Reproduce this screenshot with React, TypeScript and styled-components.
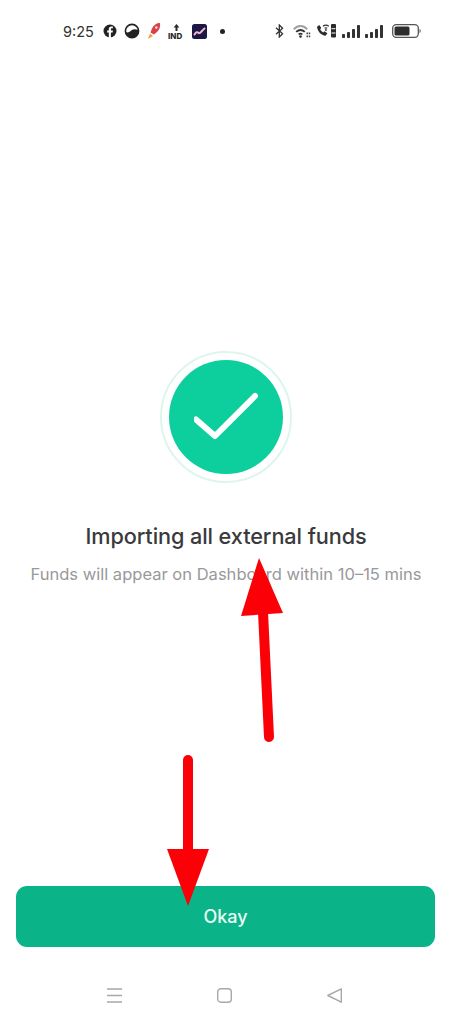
import React from "react";
import styled, { createGlobalStyle } from "styled-components";

const GlobalStyle = createGlobalStyle`
  html, body {
    margin: 0;
    padding: 0;
    background: #fff;
  }
`;

const Screen = styled.div`
  position: relative;
  display: flex;
  flex-direction: column;
  width: 456px;
  height: 1024px;
  overflow: hidden;
  background: #fff;
  font-family: Inter, "Noto Sans", sans-serif;
`;

const StatusBar = styled.div`
  display: flex;
  align-items: center;
  justify-content: space-between;
  height: 62px;
  padding: 0 35px 0 63px;
  color: #2b2b2b;
`;

const StatusGroup = styled.div<{ $gap: number }>`
  display: flex;
  align-items: center;
  gap: ${({ $gap }) => $gap}px;
`;

const Time = styled.span`
  width: 31px;
  margin-right: 2px;
  font-size: 14.5px;
  font-weight: 400;
  color: #333;
  white-space: nowrap;
`;

const NotificationDot = styled.span`
  width: 5px;
  height: 5px;
  margin-left: 6px;
  border-radius: 50%;
  background: #222;
`;

const Main = styled.main`
  flex: 1;
  display: flex;
  flex-direction: column;
  align-items: center;
  padding: 289px 4px 0 0;
`;

const Ring = styled.div`
  display: flex;
  align-items: center;
  justify-content: center;
  width: 132px;
  height: 132px;
  box-sizing: border-box;
  border: 2px solid #dcf6ee;
  border-radius: 50%;
`;

const Disc = styled.div`
  display: flex;
  align-items: center;
  justify-content: center;
  width: 114px;
  height: 114px;
  border-radius: 50%;
  background: #0ccf9d;
`;

const Title = styled.h1`
  margin: 38px 0 0;
  font-size: 21.7px;
  line-height: 30px;
  font-weight: 500;
  letter-spacing: -0.1px;
  color: #3a3a3c;
`;

const Subtitle = styled.p`
  margin: 12px 0 0;
  font-size: 16.55px;
  line-height: 22px;
  white-space: nowrap;
  color: #99999b;
`;

const Footer = styled.footer`
  display: flex;
  flex-direction: column;
  padding: 0 21px 0 16px;
`;

const OkayButton = styled.button`
  height: 61px;
  border: 0;
  padding: 0;
  border-radius: 11px;
  background: #0bb488;
  color: #eafaf5;
  font-family: inherit;
  font-size: 18px;
  font-weight: 500;
`;

const NavBar = styled.nav`
  display: flex;
  align-items: flex-start;
  justify-content: center;
  gap: 95px;
  height: 77px;
  box-sizing: border-box;
  padding: 41px 2px 0 0;
  color: #a8a8aa;
`;

const Annotation = styled.svg`
  position: absolute;
  left: 0;
  top: 0;
  width: 456px;
  height: 1024px;
  pointer-events: none;
`;

const FacebookIcon = () => (
  <svg width="14" height="14" viewBox="0 0 14 14">
    <circle cx="7" cy="7" r="6.5" fill="#222" />
    <path d="M7.900 14V8.400h1.700l.3-2H7.900V5.200c0-.6.3-1 1-1h1V2.500c-.4-.1-1-.1-1.500-.1-1.600 0-2.600 1-2.600 2.600v1.400H4.200v2h1.600V14z" fill="#fff" />
  </svg>
);

const MoonIcon = () => (
  <svg width="16" height="16" viewBox="0 0 16 16">
    <circle cx="8" cy="8" r="6.600" fill="#fff" stroke="#222" strokeWidth="1.600" />
    <path d="M1.600 9c2 .8 3.800.4 5-1 1.200-1.400 3.400-2.600 7.600-1.200C14.800 11 12 14.600 8 14.600 5 14.600 2.400 12.400 1.600 9z" fill="#222" />
  </svg>
);

const RocketIcon = () => (
  <svg width="14" height="18" viewBox="0 0 14 18">
    <path d="M13 1C9.500 1 6.500 3 5 6.500L3.500 10.500l3.500 2 3-2.500C12.500 7.500 13.500 4.500 13 1z" fill="#d8404a" />
    <path d="M3 11.500 1 17l5-3z" fill="#e8a33c" />
    <circle cx="9.300" cy="5.600" r="1.300" fill="#f6d9d0" />
  </svg>
);

const IndIcon = () => (
  <svg width="17" height="17" viewBox="0 0 17 17">
    <path d="M8.500 1 5.600 4.600h1.900V8h2V4.600h1.900z" fill="#2a2a2a" />
    <text x="0" y="15.500" fontSize="8" fontWeight="800" fontFamily="Inter, sans-serif" fill="#2a2a2a">IND</text>
  </svg>
);

const TradeIcon = () => (
  <svg width="15" height="15" viewBox="0 0 15 15">
    <rect width="15" height="15" rx="2.500" fill="#1b1846" />
    <path d="M2.500 10.500c1.500-2.500 2.800-3 4-1.500 1.500 1.200 2.800-1.800 6-4.500" fill="none" stroke="#f5b5c8" strokeWidth="2" strokeLinecap="round" />
  </svg>
);

const BluetoothIcon = () => (
  <svg width="9" height="14" viewBox="0 0 9 14">
    <path d="M1 3.800 7.600 9.800 4.300 13V1l3.300 3.200L1 10.200" fill="none" stroke="#333" strokeWidth="1.300" />
  </svg>
);

const WifiIcon = () => (
  <svg width="18" height="14" viewBox="0 0 18 14">
    <path d="M.8 5.200C4.800 1 10.200 1 14.200 5.200" fill="none" stroke="#a0a0a0" strokeWidth="2" />
    <path d="M3.200 7.900c2.800-2.500 5.800-2.500 8.600 0" fill="none" stroke="#333" strokeWidth="1.900" />
    <path d="M5.600 10.400c1.300-1.100 2.500-1.100 3.800 0" fill="none" stroke="#333" strokeWidth="1.700" />
    <circle cx="7.500" cy="12.500" r="1.300" fill="#2b2b2b" />
    <path d="M13.500 9.300h4M13.500 12.300h4" stroke="#444" strokeWidth="1.700" strokeDasharray="1.500 .7" />
  </svg>
);

const CallWifiIcon = () => (
  <svg width="21" height="16" viewBox="0 0 21 16">
    <path d="M1 3.800 3.300 2l2 3-1.100 1.200c.6 1.400 1.600 2.500 3 3.200L8.400 8.200l3 2-1.800 2.500C5.200 12.600 1.500 8.400 1 3.800z" fill="#2b2b2b" />
    <path d="M7 3.300c2-1.700 3.800-1.700 5.800 0M8.600 5.300c1.100-.8 1.600-.8 2.600 0" fill="none" stroke="#333" strokeWidth="1.200" />
    <circle cx="9.900" cy="7" r=".9" fill="#333" />
    <rect x="15" y="1" width="5" height="13.500" rx="1" fill="#2b2b2b" />
    <path d="M15.500 5.700h4M15.500 10h4" stroke="#fff" strokeWidth="1" />
  </svg>
);

const SignalIcon = () => (
  <svg width="18" height="13" viewBox="0 0 18 13">
    <rect x="0" y="9" width="3" height="4" rx=".8" fill="#333" />
    <rect x="5" y="7" width="3" height="6" rx=".8" fill="#333" />
    <rect x="10" y="4" width="3" height="9" rx=".8" fill="#333" />
    <rect x="15" y="0" width="3" height="13" rx=".8" fill="#333" />
  </svg>
);

const BatteryIcon = () => (
  <svg width="29" height="14" viewBox="0 0 29 14">
    <rect x=".7" y=".7" width="25.600" height="12.600" rx="3.500" fill="#fff" stroke="#555" strokeWidth="1.300" />
    <rect x="2.500" y="2.500" width="15" height="9" rx="1.500" fill="#2e2e2e" />
    <path d="M27.500 5v4c.8-.3 1.300-1 1.300-2s-.5-1.700-1.300-2z" fill="#666" />
  </svg>
);

const MenuIcon = () => (
  <svg width="15" height="15" viewBox="0 0 15 15">
    <path d="M0 1h15M0 7.500h15M0 14h15" stroke="currentColor" strokeWidth="1.400" />
  </svg>
);

const HomeIcon = () => (
  <svg width="15" height="15" viewBox="0 0 15 15">
    <rect x=".7" y=".7" width="13.600" height="13.600" rx="3.200" fill="none" stroke="currentColor" strokeWidth="1.400" />
  </svg>
);

const BackIcon = () => (
  <svg width="15" height="15" viewBox="0 0 15 15">
    <path d="M14.300 .8v13.400L.8 7.500z" fill="none" stroke="currentColor" strokeWidth="1.400" strokeLinejoin="round" />
  </svg>
);

export default function App() {
  return (
    <Screen>
      <GlobalStyle />
      <StatusBar>
        <StatusGroup $gap={7}>
          <Time>9:25</Time>
          <FacebookIcon />
          <MoonIcon />
          <RocketIcon />
          <IndIcon />
          <TradeIcon />
          <NotificationDot />
        </StatusGroup>
        <StatusGroup $gap={9}>
          <BluetoothIcon />
          <StatusGroup $gap={5}>
            <WifiIcon />
            <CallWifiIcon />
            <SignalIcon />
            <SignalIcon />
          </StatusGroup>
          <BatteryIcon />
        </StatusGroup>
      </StatusBar>

      <Main>
        <Ring>
          <Disc>
            <svg width="64" height="50" viewBox="0 0 64 50">
              <path d="M2 27.500 21 44 61 4" fill="none" stroke="#fff" strokeWidth="6" strokeLinecap="round" strokeLinejoin="round" />
            </svg>
          </Disc>
        </Ring>
        <Title>Importing all external funds</Title>
        <Subtitle>Funds will appear on Dashboard within 10–15 mins</Subtitle>
      </Main>

      <Footer>
        <OkayButton>Okay</OkayButton>
        <NavBar>
          <MenuIcon />
          <HomeIcon />
          <BackIcon />
        </NavBar>
      </Footer>

      <Annotation viewBox="0 0 456 1024">
        <path d="M263 612 269 737" stroke="#fb0007" strokeWidth="10" strokeLinecap="round" />
        <path d="M259 558 241 616 283 613z" fill="#fb0007" />
        <path d="M188 760V852" stroke="#fb0007" strokeWidth="10" strokeLinecap="round" />
        <path d="M167 849H209L188 906z" fill="#fb0007" />
      </Annotation>
    </Screen>
  );
}
